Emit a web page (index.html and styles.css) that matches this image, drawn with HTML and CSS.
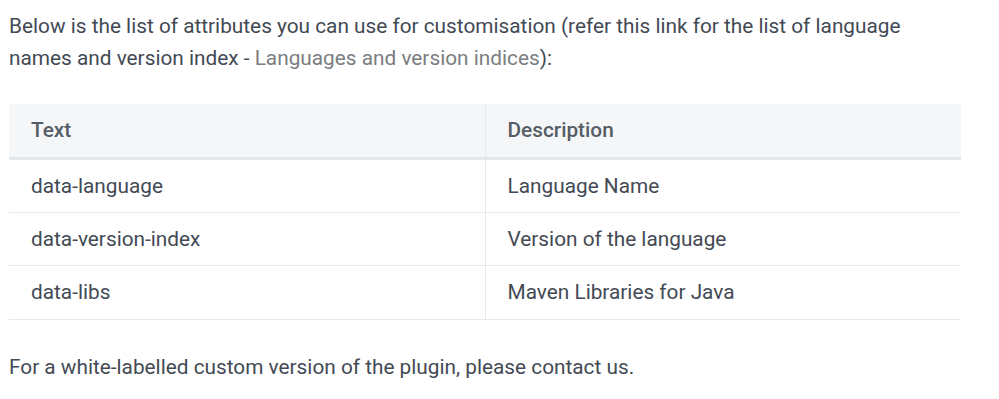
FILE: index.html
```html
<html lang="en">
<head>
    <meta charset="UTF-8">
    <title>Attributes</title>
    <link rel="stylesheet" href="styles.css">
</head>
<body>

<section class="doc">
  <p>Below is the list of attributes you can use for customisation (refer this link for the list of language names and version index - <a href="#">Languages and version indices</a>):</p>
  <table class="attr-table">
    <thead>
      <tr>
        <th>Text</th>
        <th>Description</th>
      </tr>
    </thead>
    <tbody>
      <tr>
        <td>data-language</td>
        <td>Language Name</td>
      </tr>
      <tr>
        <td>data-version-index</td>
        <td>Version of the language</td>
      </tr>
      <tr>
        <td>data-libs</td>
        <td>Maven Libraries for Java</td>
      </tr>
    </tbody>
  </table>
  <p>For a white-labelled custom version of the plugin, please contact us.</p>
</section>

</body>
</html>
```

FILE: styles.css
```css
body{
  margin: 0;
  font-family: Roboto, sans-serif;
  font-size: 1.3rem;
  color: #434a54;
  background-color: #fff;
}
.doc{
  width: 952px;
  padding: 10px 9px;
}
.doc p{
  margin: 0;
  line-height: 32px;
}
.doc a{
  color: #7b7d80;
  text-decoration: none;
}
.attr-table{
  width: 100%;
  border-collapse: collapse;
  margin: 30px 0 31px;
  font-size: inherit;
  color: inherit;
}
.attr-table th,
.attr-table td{
  width: 50%;
  text-align: left;
  padding: 12px 22px;
  line-height: 28px;
}
.attr-table th{
  padding: 12px 22px 13px;
  background-color: #f5f6f8;
  color: #555d66;
  font-weight: 500;
  border-bottom: 3px solid #e2e7ec;
}
.attr-table td{
  border-bottom: 1px solid #e6e8eb;
}
.attr-table tr:last-child td{
  padding-bottom: 13px;
}
.attr-table th + th,
.attr-table td + td{
  border-left: 1px solid #e6e8eb;
}
```
